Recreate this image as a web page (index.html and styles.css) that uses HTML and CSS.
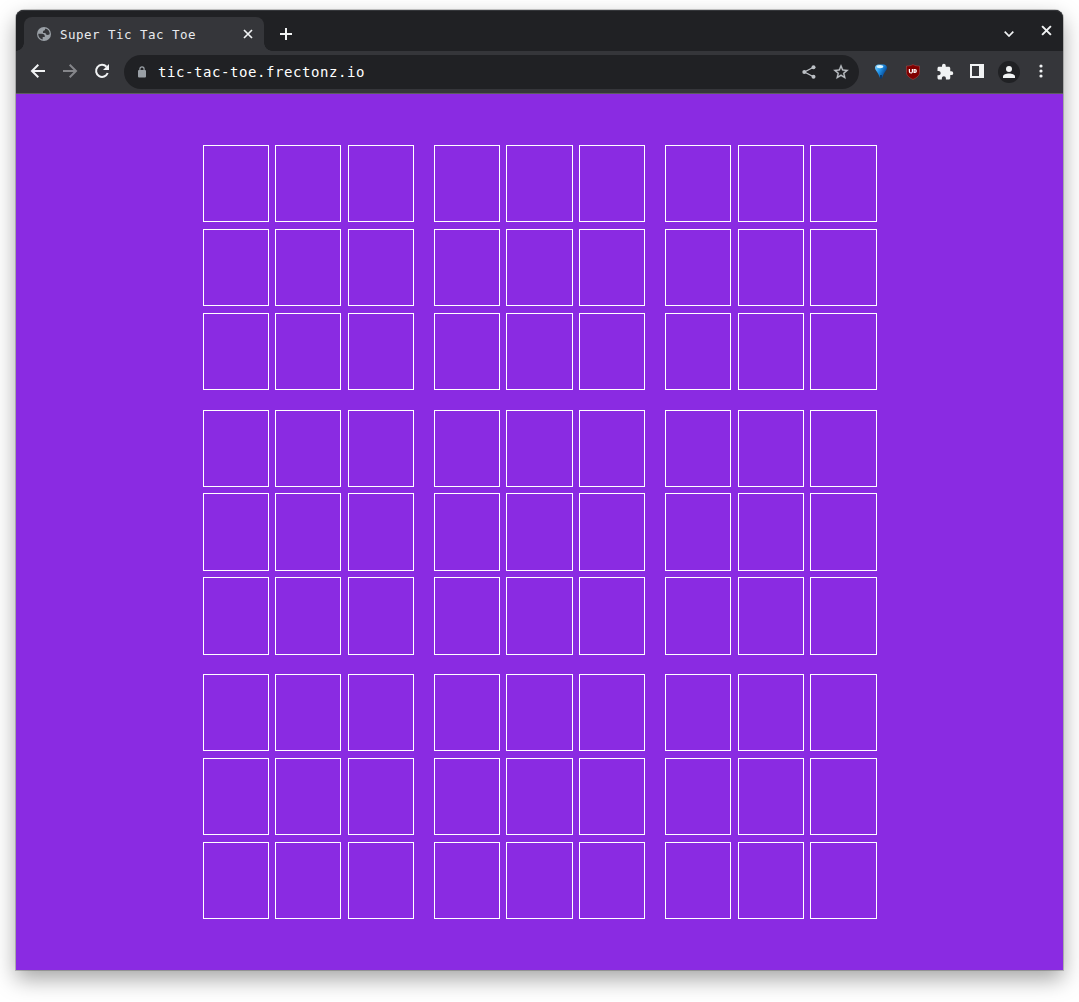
FILE: index.html
```html
<!DOCTYPE html>
<html lang="en">
<head>
<meta charset="utf-8">
<title>Super Tic Tac Toe</title>
<link rel="stylesheet" href="styles.css">
</head>
<body>
<div class="window">
  <header class="tabstrip">
    <div class="tab">
      <svg class="icon globe" viewBox="0 0 14 14"><circle cx="7" cy="7" r="7"/><path class="land" d="M1.300 6.700h3.500C6.900 6.700 8 7.700 7.800 10H5.700v2.400C3 12.100 1.100 9.700 1.300 6.700zM8.500 1.500C11.200 2.200 12.800 4.500 12.700 7c-.6.700-1.300.9-2.200.9-1.300 0-2-.6-2-1.800H6C5.800 4.200 6.400 3.300 7.900 3.300c0-.8.100-1.300.6-1.800z"/></svg>
      <span class="tab-title">Super Tic Tac Toe</span>
      <svg class="icon tab-close" viewBox="0 0 10 10"><path d="M1 1l8 8M9 1L1 9"/></svg>
    </div>
    <svg class="icon new-tab" viewBox="0 0 12 12"><path d="M6 0v12M0 6h12"/></svg>
    <svg class="icon chevron" viewBox="0 0 10 6"><path d="M.7.7L5 5 9.300.7"/></svg>
    <svg class="icon window-close" viewBox="0 0 10 10"><path d="M1 1l8 8M9 1L1 9"/></svg>
  </header>
  <nav class="toolbar">
    <svg class="icon nav" viewBox="0 0 16 16"><path d="M15 7H2.500M8.300 .8L2 7l6.300 6.200"/></svg>
    <svg class="icon nav disabled" viewBox="0 0 16 16"><path d="M1 7h12.500M7.700 .8L14 7l-6.300 6.200"/></svg>
    <svg class="icon reload" viewBox="0 0 16 16"><path class="arc" d="M13.700 10A6 6 0 1 1 12.500 3.800"/><path d="M15 1v6H9z"/></svg>
    <div class="address">
      <svg class="icon lock" viewBox="0 0 8 12"><path class="shackle" d="M1.900 5V3a2.100 2.100 0 0 1 4.200 0v2"/><rect y="4" width="8" height="7.500" rx="1"/></svg>
      <span class="url">tic-tac-toe.frectonz.io</span>
      <svg class="icon share" viewBox="0 0 14 14"><path d="M11.500 2.200L2.500 7l9 4.800"/><circle cx="11.500" cy="2.300" r="2"/><circle cx="2.300" cy="7" r="2"/><circle cx="11.500" cy="11.700" r="2"/></svg>
      <svg class="icon star" viewBox="0 0 24 24"><path d="M22 9.240l-7.190-.62L12 2 9.190 8.630 2 9.240l5.460 4.730L5.820 21 12 17.270 18.180 21l-1.630-7.030L22 9.240zM12 15.400l-3.760 2.270 1-4.280-3.320-2.880 4.380-.38L12 6.100l1.710 4.040 4.380.38-3.320 2.880 1 4.280L12 15.400z"/></svg>
    </div>
    <div class="extensions">
      <svg class="icon balloon" viewBox="0 0 12 15">
        <defs><linearGradient id="sky" x1="0" y1="0" x2="1" y2=".6"><stop offset="0" stop-color="#8bd8ff"/><stop offset=".45" stop-color="#2499ee"/><stop offset="1" stop-color="#003b85"/></linearGradient></defs>
        <path fill="url(#sky)" d="M3 .500h6Q12 1.200 12 4c0 2-2.500 4-3.500 6.500L7 14H5L3.500 10.500C2.500 8 0 6 0 4Q0 1.200 3 .500z"/><ellipse fill="#d9f5ff" cx="5" cy="2.600" rx="3.300" ry="1.700"/><path fill="#063b72" d="M5 11h2v3.500H5z"/>
      </svg>
      <svg class="icon shield" viewBox="0 0 14 16"><path fill="#800000" stroke="#a34848" stroke-width=".6" d="M7 .500C5 1.800 3 2 .500 2v6.500c0 3 2.500 5 6.500 7 4-2 6.500-4 6.500-7V2C11 2 9 1.800 7 .500z"/><path fill="none" stroke="#fff" stroke-width="1.200" d="M3.400 5v2.500a1.500 1.500 0 0 0 3 0V5M8.100 5.600v2.800h.8a1.400 1.400 0 0 0 0-2.800z"/></svg>
      <svg class="icon puzzle" viewBox="0 0 24 24"><path d="M20.500 11H19V7c0-1.100-.9-2-2-2h-4V3.500a2.500 2.500 0 0 0-5 0V5H4c-1.100 0-1.990.9-1.990 2v3.800H3.500c1.490 0 2.700 1.210 2.700 2.700s-1.210 2.700-2.700 2.700H2V20c0 1.100.9 2 2 2h3.800v-1.500c0-1.490 1.210-2.700 2.700-2.700s2.700 1.210 2.700 2.700V22H17c1.100 0 2-.9 2-2v-4h1.500a2.500 2.500 0 0 0 0-5z"/></svg>
      <svg class="icon panel" viewBox="0 0 14 14"><path fill-rule="evenodd" d="M0 0h14v14H0zM2 2v10h7V2z"/></svg>
      <span class="avatar"><svg class="icon person" viewBox="0 0 12 12"><circle cx="6" cy="3" r="3"/><path d="M0 12v-1.500C0 8.500 3 7.500 6 7.500s6 1 6 3V12z"/></svg></span>
      <svg class="icon menu" viewBox="0 0 4 14"><circle cx="2" cy="2" r="1.600"/><circle cx="2" cy="7" r="1.600"/><circle cx="2" cy="12" r="1.600"/></svg>
    </div>
  </nav>
  <main class="page">
    <div class="boards">
      <div class="board"><i></i><i></i><i></i><i></i><i></i><i></i><i></i><i></i><i></i></div>
      <div class="board"><i></i><i></i><i></i><i></i><i></i><i></i><i></i><i></i><i></i></div>
      <div class="board"><i></i><i></i><i></i><i></i><i></i><i></i><i></i><i></i><i></i></div>
      <div class="board"><i></i><i></i><i></i><i></i><i></i><i></i><i></i><i></i><i></i></div>
      <div class="board"><i></i><i></i><i></i><i></i><i></i><i></i><i></i><i></i><i></i></div>
      <div class="board"><i></i><i></i><i></i><i></i><i></i><i></i><i></i><i></i><i></i></div>
      <div class="board"><i></i><i></i><i></i><i></i><i></i><i></i><i></i><i></i><i></i></div>
      <div class="board"><i></i><i></i><i></i><i></i><i></i><i></i><i></i><i></i><i></i></div>
      <div class="board"><i></i><i></i><i></i><i></i><i></i><i></i><i></i><i></i><i></i></div>
    </div>
  </main>
</div>
</body>
</html>
```
FILE: styles.css
```css
* { box-sizing: border-box; }

body {
  margin: 0;
  height: 1002px;
  padding: 10px 16px 32px;
  overflow: hidden;
  background: #fff;
  font-family: "DejaVu Sans Mono", "Liberation Mono", monospace;
}

.window {
  display: flex;
  flex-direction: column;
  height: 960px;
  border-radius: 8px 8px 0 0;
  background: #35363a;
  box-shadow: 0 0 0 1px rgba(0, 0, 0, .2), 0 9px 22px rgba(0, 0, 0, .36);
}

.icon { display: block; flex: none; fill: #f1f3f4; }

.tabstrip {
  display: flex;
  height: 41px;
  padding-left: 8px;
  border-radius: 8px 8px 0 0;
  background: #202124;
  box-shadow: inset 0 1px #34363a;
}

.tab {
  position: relative;
  display: flex;
  align-items: center;
  width: 240px;
  height: 34px;
  margin-top: 7px;
  padding: 0 11px 0 13px;
  border-radius: 8px 8px 0 0;
  background: #35363a;
}

/* Concave feet where the tab meets the toolbar */
.tab::before,
.tab::after {
  content: "";
  position: absolute;
  bottom: 0;
  width: 8px;
  height: 8px;
}
.tab::before { left: -8px; background: radial-gradient(circle at 0 0, transparent 7.5px, #35363a 8px); }
.tab::after { right: -8px; background: radial-gradient(circle at 100% 0, transparent 7.5px, #35363a 8px); }

.globe { width: 14px; height: 14px; fill: #9aa0a6; }
.land { fill: #35363a; }

.tab-title {
  flex: 1;
  margin-left: 9px;
  padding-top: 1px;
  color: #e8eaed;
  font-size: 12.5px;
  letter-spacing: .475px;
  line-height: 16px;
  white-space: pre;
}

.tab-close,
.new-tab,
.chevron,
.window-close,
.nav { fill: none; stroke: #f1f3f4; stroke-width: 1.7; }

.tab-close { width: 10px; height: 10px; }
.new-tab { width: 12px; height: 12px; margin: 18px 0 0 16px; stroke-width: 2; }
.chevron { width: 10px; height: 6px; margin: 21px 0 0 auto; }
.window-close { width: 11px; height: 11px; margin: 15px 11px 0 27px; stroke-width: 1.8; }

.toolbar {
  display: flex;
  align-items: center;
  height: 43px;
  padding: 0 20px 1px 14px;
  border-bottom: 1px solid #5c5c60;
}

.nav { width: 16px; height: 16px; margin-right: 16px; stroke-width: 2; }
.nav.disabled { stroke: #85868a; }
.reload { width: 16px; height: 16px; margin-top: -2px; }
.arc { fill: none; stroke: #f1f3f4; stroke-width: 2; }

.address {
  display: flex;
  align-items: center;
  width: 735px;
  height: 34px;
  margin-left: 14px;
  padding: 0 9px 0 14px;
  border-radius: 17px;
  background: #202124;
}

.lock { width: 8px; height: 12px; fill: #9aa0a6; }
.shackle { fill: none; stroke: #9aa0a6; stroke-width: 1.2; }

.url {
  flex: 1;
  margin-left: 12px;
  color: #fff;
  font-size: 14px;
  letter-spacing: .571px;
  line-height: 20px;
}

.share { width: 14px; height: 14px; fill: #bdc1c6; stroke: #bdc1c6; stroke-width: 1.3; }
.share path { fill: none; }
.share circle { stroke: none; }
.star { width: 18px; height: 18px; margin-left: 16px; fill: #bdc1c6; stroke: #bdc1c6; stroke-width: .4; }

.extensions { display: flex; flex: 1; align-items: center; margin-left: 16px; }
.balloon { width: 12px; height: 15px; }
.shield { width: 14px; height: 16px; margin-left: 19px; }
.puzzle { width: 18px; height: 18px; margin-left: 16px; }
.panel { width: 14px; height: 14px; margin: -2px 0 0 16px; }

.avatar {
  display: grid;
  place-items: center;
  width: 22px;
  height: 22px;
  margin-left: 14px;
  border-radius: 50%;
  background: #202124;
}
.person { width: 12px; height: 12px; }
.menu { width: 4px; height: 14px; margin: -1px 0 0 auto; }

.page { flex: 1; padding: 51.15px 0 0 186.55px; background: #8a2be2; }

.boards {
  display: grid;
  grid-template: repeat(3, 1fr) / repeat(3, 1fr);
  gap: 19.4px 19.65px;
  width: 674px;
  height: 773.8px;
}

.board {
  display: grid;
  grid-template: repeat(3, 1fr) / repeat(3, 1fr);
  gap: 6.55px;
}

.board i { border: 1px solid #fff; }
```
